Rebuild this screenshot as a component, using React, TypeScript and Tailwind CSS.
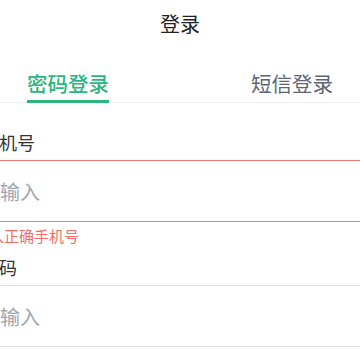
import React from 'react';

const fields = [
    { label: '手机号', error: '请输入正确手机号' },
    { label: '密码', error: '' },
];

export default function App() {
    return (
        <div className="w-[360px] h-[360px] overflow-hidden bg-white font-['Noto_Sans_CJK_SC','Noto_Sans',sans-serif]">
            <header className="h-[48px] flex items-center justify-center text-[20px] text-[#222222]">
                登录
            </header>

            <div className="h-[55px] flex items-end justify-between px-[27px] border-b border-[#efefef]">
                <button className="flex flex-col -mb-px">
                    <span className="text-[20.5px] leading-[30px] text-[#2bb67f] font-medium">密码登录</span>
                    <span className="mt-[2px] h-[3px] bg-[#2bb67f]" />
                </button>
                <button className="flex flex-col -mb-px">
                    <span className="text-[20.5px] leading-[30px] text-[#5d6573]">短信登录</span>
                    <span className="mt-[2px] h-[3px]" />
                </button>
            </div>

            <div className="-ml-[19px] w-[420px] pt-[27px]">
                {fields.map((f) => (
                    <div key={f.label} className={f.error ? 'mb-[9px]' : ''}>
                        <label className="block h-[24px] leading-[24px] text-[18px] text-[#333333]">
                            {f.label}
                        </label>
                        <div
                            className={`mt-[6px] h-[62px] flex items-center border-y ${f.error ? 'border-[#f47a7a]' : 'border-[#dcdfe6]'}`}
                        >
                            <input
                                placeholder="请输入"
                                className="w-full bg-transparent outline-none text-[20px] leading-[28px] pt-[2px] placeholder:text-[#a0a6b0] -ml-[1px]"
                            />
                        </div>
                        {f.error && (
                            <div className="-ml-[22px] mt-[4px] leading-[20px] text-[15px] text-[#f56c6c]">
                                {f.error}
                            </div>
                        )}
                    </div>
                ))}
            </div>
        </div>
    );
}
